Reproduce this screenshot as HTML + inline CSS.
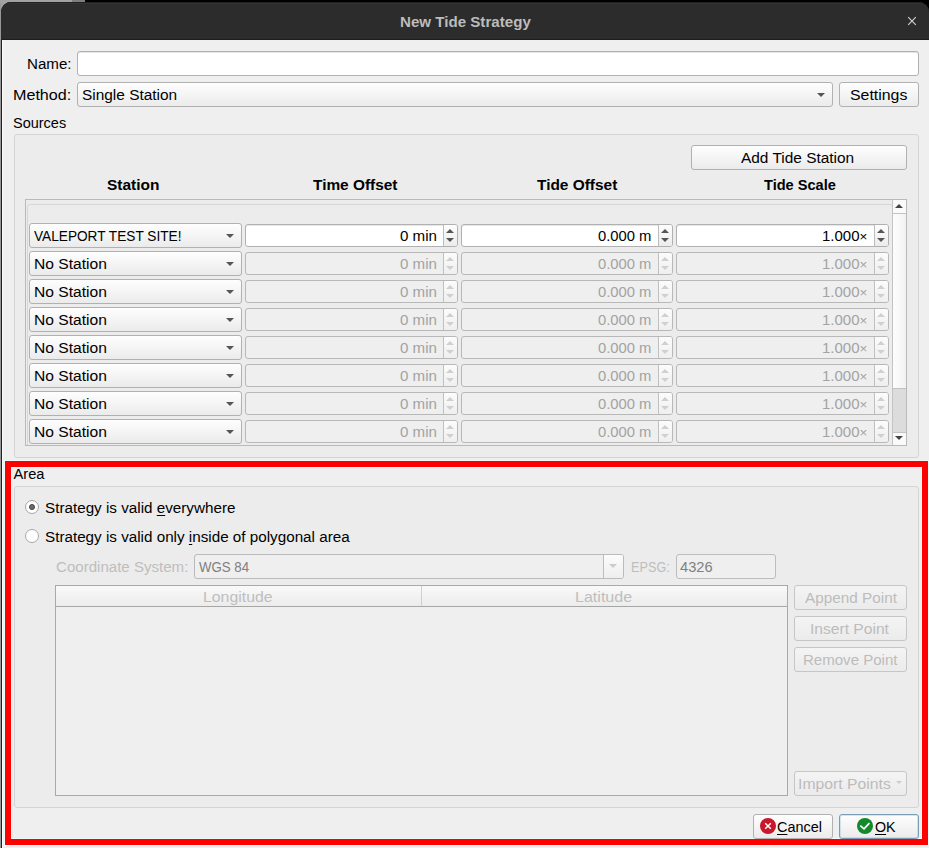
<!DOCTYPE html>
<html lang="en"><head><meta charset="utf-8"><title>New Tide Strategy</title>
<style>
*{box-sizing:border-box;margin:0;padding:0}
html,body{width:929px;height:848px;overflow:hidden;background:#efefef}
body{position:relative;font-family:"Liberation Sans","DejaVu Sans",sans-serif;font-size:14.67px;color:#000;line-height:18px}
div,span,i,b{position:absolute;display:block;font-style:normal;font-weight:normal;white-space:nowrap}
.t{line-height:18px;transform-origin:0 50%}
.t small{font-size:13.2px;position:relative;top:-0.4px}
.t u{text-decoration:underline;text-underline-offset:2.4px;text-decoration-thickness:1.4px}
.strip{left:0;top:0;width:929px;height:3px;background:#000}
.tb{left:1px;top:2px;width:928px;height:38px;background:#2c2c2c;border-radius:10px 10px 0 0;border-bottom:1px solid #1d1d1d;box-shadow:inset 0 1px 0 #202020,inset 0 2px 0 #333}
.btn{border:1px solid #b1b1b1;border-radius:3px;background:linear-gradient(#fefefe,#ebebeb)}
.btn.dis{border-color:#c6c6c6;background:linear-gradient(#f4f4f4,#ebebeb)}
.edit{border:1px solid #b1b1b1;border-radius:3px;background:#fff;box-shadow:inset 0 1px 0 #e6e6e6}
.combo{border:1px solid #b1b1b1;border-radius:3px;background:linear-gradient(#fefefe,#ebebeb)}
.arr{right:7px;top:10px;width:0;height:0;border-left:4px solid transparent;border-right:4px solid transparent;border-top:4px solid #555}
.spin{height:23px;border:1px solid #b1b1b1;border-radius:3px;background:#fff;box-shadow:inset 0 1px 0 #e6e6e6}
.spin .sb{right:0;top:0;width:14px;height:21px;border-left:1px solid #bcbcbc;background:linear-gradient(#fdfdfd,#ececec);border-radius:0 2px 2px 0}
.spin .up{left:2px;top:4px;width:0;height:0;border-left:4px solid transparent;border-right:4px solid transparent;border-bottom:4px solid #555}
.spin .dn{left:2px;top:13px;width:0;height:0;border-left:4px solid transparent;border-right:4px solid transparent;border-top:4px solid #555}
.spin.dis{background:#efefef;border-color:#b8b8b8;box-shadow:none}
.spin.dis .sb{background:linear-gradient(#fcfcfc,#efefef);border-left-color:#c0c0c0}
.spin.dis .up{border-bottom-color:#d0d0d0}
.spin.dis .dn{border-top-color:#d0d0d0}
.gb{border:1px solid #d4d4d4;border-radius:3px;background:#ececec}
</style></head><body>
<div style="left:0;top:0;width:20px;height:20px;background:#a2a2a2"></div>
<div class="strip"></div>
<div style="left:909px;top:0;width:20px;height:20px;background:#000"></div>
<div style="left:0;top:0;width:72px;height:3px;background:#a2a2a2"></div>
<div style="left:72px;top:0;width:13px;height:3px;background:#7d7d7d"></div>
<div style="left:0;top:3px;width:1px;height:845px;background:#989898"></div>
<div style="left:2px;top:40px;width:1px;height:808px;background:#fbfbfb"></div>
<div style="left:1px;top:10px;width:1px;height:838px;background:#1f1f1f"></div>
<div class="tb"></div>
<svg style="position:absolute;left:906px;top:15px" width="12" height="12" viewBox="0 0 12 12"><path d="M2.2 2.2L9.8 9.8M9.8 2.2L2.2 9.8" stroke="#cfcfcf" stroke-width="1.2" fill="none"/></svg>

<div class="edit" style="left:77px;top:51px;width:842px;height:25px"></div>
<div class="combo" style="left:77px;top:82px;width:756px;height:25px"><i class="arr"></i></div>
<div class="btn" style="left:839px;top:82px;width:80px;height:25px"></div>

<div class="gb" style="left:14px;top:134px;width:905px;height:324px"></div>
<div class="btn" style="left:691px;top:145px;width:216px;height:25px"></div>

<div style="left:25px;top:199px;width:882px;height:247px;border:1px solid #b9b9b9;background:#ececec"></div>
<div style="left:27px;top:204px;width:866px;height:260px;border:1px solid #d6d6d6;border-radius:3px;clip-path:inset(0 0 19px 0)"></div>
<div class="combo" style="left:29px;top:223px;width:213px;height:25px"><i class="arr"></i></div>
<div class="spin" style="left:245px;top:224px;width:213px"><b class="sb"><i class="up"></i><i class="dn"></i></b></div>
<div class="spin" style="left:461px;top:224px;width:212px"><b class="sb"><i class="up"></i><i class="dn"></i></b></div>
<div class="spin" style="left:676px;top:224px;width:213px"><b class="sb"><i class="up"></i><i class="dn"></i></b></div>
<div class="combo" style="left:29px;top:251px;width:213px;height:25px"><i class="arr"></i></div>
<div class="spin dis" style="left:245px;top:252px;width:213px"><b class="sb"><i class="up"></i><i class="dn"></i></b></div>
<div class="spin dis" style="left:461px;top:252px;width:212px"><b class="sb"><i class="up"></i><i class="dn"></i></b></div>
<div class="spin dis" style="left:676px;top:252px;width:213px"><b class="sb"><i class="up"></i><i class="dn"></i></b></div>
<div class="combo" style="left:29px;top:279px;width:213px;height:25px"><i class="arr"></i></div>
<div class="spin dis" style="left:245px;top:280px;width:213px"><b class="sb"><i class="up"></i><i class="dn"></i></b></div>
<div class="spin dis" style="left:461px;top:280px;width:212px"><b class="sb"><i class="up"></i><i class="dn"></i></b></div>
<div class="spin dis" style="left:676px;top:280px;width:213px"><b class="sb"><i class="up"></i><i class="dn"></i></b></div>
<div class="combo" style="left:29px;top:307px;width:213px;height:25px"><i class="arr"></i></div>
<div class="spin dis" style="left:245px;top:308px;width:213px"><b class="sb"><i class="up"></i><i class="dn"></i></b></div>
<div class="spin dis" style="left:461px;top:308px;width:212px"><b class="sb"><i class="up"></i><i class="dn"></i></b></div>
<div class="spin dis" style="left:676px;top:308px;width:213px"><b class="sb"><i class="up"></i><i class="dn"></i></b></div>
<div class="combo" style="left:29px;top:335px;width:213px;height:25px"><i class="arr"></i></div>
<div class="spin dis" style="left:245px;top:336px;width:213px"><b class="sb"><i class="up"></i><i class="dn"></i></b></div>
<div class="spin dis" style="left:461px;top:336px;width:212px"><b class="sb"><i class="up"></i><i class="dn"></i></b></div>
<div class="spin dis" style="left:676px;top:336px;width:213px"><b class="sb"><i class="up"></i><i class="dn"></i></b></div>
<div class="combo" style="left:29px;top:363px;width:213px;height:25px"><i class="arr"></i></div>
<div class="spin dis" style="left:245px;top:364px;width:213px"><b class="sb"><i class="up"></i><i class="dn"></i></b></div>
<div class="spin dis" style="left:461px;top:364px;width:212px"><b class="sb"><i class="up"></i><i class="dn"></i></b></div>
<div class="spin dis" style="left:676px;top:364px;width:213px"><b class="sb"><i class="up"></i><i class="dn"></i></b></div>
<div class="combo" style="left:29px;top:391px;width:213px;height:25px"><i class="arr"></i></div>
<div class="spin dis" style="left:245px;top:392px;width:213px"><b class="sb"><i class="up"></i><i class="dn"></i></b></div>
<div class="spin dis" style="left:461px;top:392px;width:212px"><b class="sb"><i class="up"></i><i class="dn"></i></b></div>
<div class="spin dis" style="left:676px;top:392px;width:213px"><b class="sb"><i class="up"></i><i class="dn"></i></b></div>
<div class="combo" style="left:29px;top:419px;width:213px;height:25px"><i class="arr"></i></div>
<div class="spin dis" style="left:245px;top:420px;width:213px"><b class="sb"><i class="up"></i><i class="dn"></i></b></div>
<div class="spin dis" style="left:461px;top:420px;width:212px"><b class="sb"><i class="up"></i><i class="dn"></i></b></div>
<div class="spin dis" style="left:676px;top:420px;width:213px"><b class="sb"><i class="up"></i><i class="dn"></i></b></div>
<!-- scrollbar -->
<div style="left:892px;top:200px;width:14px;height:245px;background:#dcdcdc;border-left:1px solid #c3c3c3"></div>
<div style="left:893px;top:213px;width:13px;height:176px;background:linear-gradient(90deg,#fdfdfd,#f2f2f2);border-top:1px solid #c3c3c3;border-bottom:1px solid #c3c3c3"></div>
<div style="left:893px;top:200px;width:13px;height:13px;background:#fafafa"></div>
<div style="left:893px;top:432px;width:13px;height:13px;background:#fafafa;border-top:1px solid #c3c3c3"></div>
<i style="left:895px;top:204px;width:0;height:0;border-left:4px solid transparent;border-right:4px solid transparent;border-bottom:4px solid #444"></i>
<i style="left:895px;top:436px;width:0;height:0;border-left:4px solid transparent;border-right:4px solid transparent;border-top:4px solid #444"></i>

<!-- red highlight -->
<div style="left:5px;top:461px;width:923px;height:384px;border:6px solid #fe0000;box-shadow:0 0 0 1px #e9fafa,inset 0 0 0 1px #e9fafa"></div>

<div class="gb" style="left:14px;top:486px;width:905px;height:322px"></div>
<div style="left:25px;top:500px;width:14px;height:14px;border:1px solid #a6a6a6;border-radius:50%;background:#fff"></div>
<div style="left:29px;top:504px;width:6px;height:6px;border-radius:50%;background:#6a6a6a;border:1px solid #424242"></div>
<div style="left:25px;top:529px;width:14px;height:14px;border:1px solid #a6a6a6;border-radius:50%;background:#fff"></div>

<div style="left:194px;top:554px;width:430px;height:25px;border:1px solid #bbb;border-radius:3px;background:#efefef"><b style="right:0;top:0;width:20px;height:23px;border-left:1px solid #bdbdbd;background:linear-gradient(#fcfcfc,#eee);border-radius:0 2px 2px 0"></b><i class="arr" style="border-top-color:#cbcbcb;right:6px;top:9px"></i></div>
<div style="left:676px;top:554px;width:100px;height:25px;border:1px solid #bdbdbd;border-radius:3px;background:#efefef"></div>

<div style="left:55px;top:585px;width:733px;height:211px;border:1px solid #a9a9a9;background:#efefef"></div>
<div style="left:56px;top:586px;width:731px;height:21px;background:linear-gradient(#f9f9f9,#ececec);border-bottom:1px solid #a6a6a6"></div>
<div style="left:421px;top:586px;width:1px;height:20px;background:#cfcfcf"></div>

<div class="btn dis" style="left:794px;top:585px;width:113px;height:25px"></div>
<div class="btn dis" style="left:794px;top:616px;width:113px;height:25px"></div>
<div class="btn dis" style="left:794px;top:647px;width:113px;height:25px"></div>
<div class="btn dis" style="left:794px;top:771px;width:113px;height:25px"><i style="right:4px;top:9px;width:0;height:0;border-left:3px solid transparent;border-right:3px solid transparent;border-top:3px solid #cdcdcd"></i></div>

<div class="btn" style="left:753px;top:814px;width:80px;height:25px"></div>
<div class="btn" style="left:839px;top:814px;width:80px;height:25px;border-color:#7a9db6;box-shadow:inset 0 0 0 1px rgba(150,195,225,.4)"></div>
<svg style="position:absolute;left:760px;top:818px" width="16" height="16" viewBox="0 0 16 16"><circle cx="8" cy="8" r="8" fill="#c9182c"/><path d="M5.2 5.2L10.8 10.8M10.8 5.2L5.2 10.8" stroke="#fff" stroke-width="1.5" fill="none"/></svg>
<svg style="position:absolute;left:857px;top:818px" width="16" height="16" viewBox="0 0 16 16"><circle cx="8" cy="8" r="8" fill="#12892a"/><path d="M3.3 7.6L7 10.9L12.4 5.1" stroke="#fff" stroke-width="1.7" fill="none"/></svg>
<span class="t" id="t0" style="left:399.94px;top:13px;transform:scaleX(1.0315);color:#bcbcbc;font-weight:bold;">New Tide Strategy</span>
<span class="t" id="t1" style="left:27.26px;top:55px;transform:scaleX(1.0309);">Name:</span>
<span class="t" id="t2" style="left:13.09px;top:86px;transform:scaleX(1.0998);">Method:</span>
<span class="t" id="t3" style="left:81.55px;top:86px;transform:scaleX(1.0520);">Single Station</span>
<span class="t" id="t4" style="left:850.09px;top:86px;transform:scaleX(1.0831);">Settings</span>
<span class="t" id="t5" style="left:13.11px;top:114px;transform:scaleX(0.9885);">Sources</span>
<span class="t" id="t6" style="left:741.45px;top:149px;transform:scaleX(1.0525);">Add Tide Station</span>
<span class="t" id="t7" style="left:106.92px;top:176px;transform:scaleX(1.0555);font-weight:bold;">Station</span>
<span class="t" id="t8" style="left:312.53px;top:176px;transform:scaleX(1.0514);font-weight:bold;">Time Offset</span>
<span class="t" id="t9" style="left:537.24px;top:176px;transform:scaleX(1.0525);font-weight:bold;">Tide Offset</span>
<span class="t" id="t10" style="left:763.93px;top:176px;transform:scaleX(0.9953);font-weight:bold;">Tide Scale</span>
<span class="t" id="t11" style="left:33.99px;top:227px;transform:scaleX(0.9315);">VALEPORT TEST SITE!</span>
<span class="t" id="t12" style="left:400.28px;top:227px;transform:scaleX(1.0316);">0 min</span>
<span class="t" id="t13" style="left:598.08px;top:227px;transform:scaleX(1.0087);">0.000 m</span>
<span class="t" id="t14" style="left:822.02px;top:227px;transform:scaleX(1.0233);">1.000<small>×</small></span>
<span class="t" id="t15" style="left:33.90px;top:255px;transform:scaleX(1.0640);">No Station</span>
<span class="t" id="t16" style="left:400.28px;top:255px;transform:scaleX(1.0316);color:#a3a3a3;">0 min</span>
<span class="t" id="t17" style="left:598.08px;top:255px;transform:scaleX(1.0087);color:#a3a3a3;">0.000 m</span>
<span class="t" id="t18" style="left:822.02px;top:255px;transform:scaleX(1.0233);color:#a3a3a3;">1.000<small>×</small></span>
<span class="t" id="t19" style="left:33.90px;top:283px;transform:scaleX(1.0640);">No Station</span>
<span class="t" id="t20" style="left:400.28px;top:283px;transform:scaleX(1.0316);color:#a3a3a3;">0 min</span>
<span class="t" id="t21" style="left:598.08px;top:283px;transform:scaleX(1.0087);color:#a3a3a3;">0.000 m</span>
<span class="t" id="t22" style="left:822.02px;top:283px;transform:scaleX(1.0233);color:#a3a3a3;">1.000<small>×</small></span>
<span class="t" id="t23" style="left:33.90px;top:311px;transform:scaleX(1.0640);">No Station</span>
<span class="t" id="t24" style="left:400.28px;top:311px;transform:scaleX(1.0316);color:#a3a3a3;">0 min</span>
<span class="t" id="t25" style="left:598.08px;top:311px;transform:scaleX(1.0087);color:#a3a3a3;">0.000 m</span>
<span class="t" id="t26" style="left:822.02px;top:311px;transform:scaleX(1.0233);color:#a3a3a3;">1.000<small>×</small></span>
<span class="t" id="t27" style="left:33.90px;top:339px;transform:scaleX(1.0640);">No Station</span>
<span class="t" id="t28" style="left:400.28px;top:339px;transform:scaleX(1.0316);color:#a3a3a3;">0 min</span>
<span class="t" id="t29" style="left:598.08px;top:339px;transform:scaleX(1.0087);color:#a3a3a3;">0.000 m</span>
<span class="t" id="t30" style="left:822.02px;top:339px;transform:scaleX(1.0233);color:#a3a3a3;">1.000<small>×</small></span>
<span class="t" id="t31" style="left:33.90px;top:367px;transform:scaleX(1.0640);">No Station</span>
<span class="t" id="t32" style="left:400.28px;top:367px;transform:scaleX(1.0316);color:#a3a3a3;">0 min</span>
<span class="t" id="t33" style="left:598.08px;top:367px;transform:scaleX(1.0087);color:#a3a3a3;">0.000 m</span>
<span class="t" id="t34" style="left:822.02px;top:367px;transform:scaleX(1.0233);color:#a3a3a3;">1.000<small>×</small></span>
<span class="t" id="t35" style="left:33.90px;top:395px;transform:scaleX(1.0640);">No Station</span>
<span class="t" id="t36" style="left:400.28px;top:395px;transform:scaleX(1.0316);color:#a3a3a3;">0 min</span>
<span class="t" id="t37" style="left:598.08px;top:395px;transform:scaleX(1.0087);color:#a3a3a3;">0.000 m</span>
<span class="t" id="t38" style="left:822.02px;top:395px;transform:scaleX(1.0233);color:#a3a3a3;">1.000<small>×</small></span>
<span class="t" id="t39" style="left:33.90px;top:423px;transform:scaleX(1.0640);">No Station</span>
<span class="t" id="t40" style="left:400.28px;top:423px;transform:scaleX(1.0316);color:#a3a3a3;">0 min</span>
<span class="t" id="t41" style="left:598.08px;top:423px;transform:scaleX(1.0087);color:#a3a3a3;">0.000 m</span>
<span class="t" id="t42" style="left:822.02px;top:423px;transform:scaleX(1.0233);color:#a3a3a3;">1.000<small>×</small></span>
<span class="t" id="t43" style="left:13.56px;top:465px;">Area</span>
<span class="t" id="t44" style="left:44.72px;top:499px;transform:scaleX(1.0390);">Strategy is valid <u>e</u>verywhere</span>
<span class="t" id="t45" style="left:44.50px;top:528px;transform:scaleX(1.0387);">Strategy is valid only <u>i</u>nside of polygonal area</span>
<span class="t" id="t46" style="left:55.92px;top:558px;transform:scaleX(1.0280);color:#bebebe;">Coordinate System:</span>
<span class="t" id="t47" style="left:198.53px;top:558px;transform:scaleX(0.9049);color:#808080;">WGS 84</span>
<span class="t" id="t48" style="left:630.70px;top:558px;transform:scaleX(0.8665);color:#bebebe;">EPSG:</span>
<span class="t" id="t49" style="left:680.04px;top:558px;color:#808080;">4326</span>
<span class="t" id="t50" style="left:203.32px;top:588px;transform:scaleX(1.0802);color:#bebebe;">Longitude</span>
<span class="t" id="t51" style="left:575.08px;top:588px;transform:scaleX(1.0961);color:#bebebe;">Latitude</span>
<span class="t" id="t52" style="left:804.71px;top:589px;transform:scaleX(1.0441);color:#bcbcbc;">Append Point</span>
<span class="t" id="t53" style="left:810.45px;top:620px;transform:scaleX(1.0649);color:#bcbcbc;">Insert Point</span>
<span class="t" id="t54" style="left:803.05px;top:651px;transform:scaleX(1.0261);color:#bcbcbc;">Remove Point</span>
<span class="t" id="t55" style="left:797.88px;top:775px;transform:scaleX(1.0746);color:#bcbcbc;">Import Points</span>
<span class="t" id="t56" style="left:776.99px;top:818px;transform:scaleX(0.9847);"><u>C</u>ancel</span>
<span class="t" id="t57" style="left:875.14px;top:818px;transform:scaleX(0.9723);"><u>O</u>K</span>
</body></html>
